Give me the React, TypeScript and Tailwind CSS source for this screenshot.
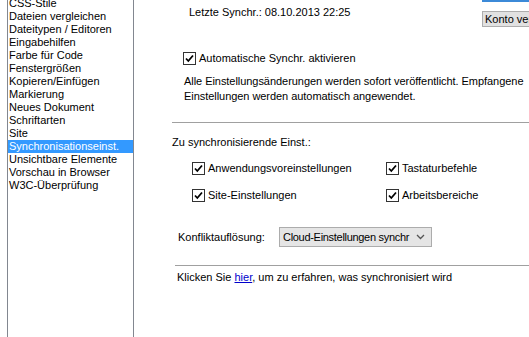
import type { ReactNode } from "react"

const items = [
  "CSS-Stile",
  "Dateien vergleichen",
  "Dateitypen / Editoren",
  "Eingabehilfen",
  "Farbe für Code",
  "Fenstergrößen",
  "Kopieren/Einfügen",
  "Markierung",
  "Neues Dokument",
  "Schriftarten",
  "Site",
  "Synchronisationseinst.",
  "Unsichtbare Elemente",
  "Vorschau in Browser",
  "W3C-Überprüfung",
]

function Check({ label, className = "" }: { label: ReactNode; className?: string }) {
  return (
    <div className={`flex items-center h-[13px] ${className}`}>
      <span className="w-[13px] h-[13px] shrink-0 border border-[#333] bg-white flex items-center justify-center">
        <svg width="11" height="11" viewBox="0 0 11 11">
          <path d="M2 5.5 L4.3 8 L9 2.5" fill="none" stroke="#000" strokeWidth="1.8" />
        </svg>
      </span>
      <span className="ml-[3px] whitespace-nowrap">{label}</span>
    </div>
  )
}

export default function App() {
  return (
    <div
      className="w-[529px] h-[337px] overflow-hidden bg-white flex text-[11px] leading-[13px] text-black"
      style={{ fontFamily: '"Liberation Sans", Arial, sans-serif' }}
    >
      {/* Kategorienliste */}
      <div className="w-[134px] shrink-0 pl-[7px]">
        <div className="h-full border-x border-[#828790] overflow-hidden">
          <ul className="-mt-[3px]">
            {items.map((it) => (
              <li
                key={it}
                className={`h-[13px] pl-[1px] whitespace-nowrap ${
                  it === "Synchronisationseinst." ? "bg-[#3399ff] text-white" : ""
                }`}
              >
                {it}
              </li>
            ))}
          </ul>
        </div>
      </div>

      {/* Einstellungen */}
      <div className="flex-1 min-w-0 flex flex-col">
        <div className="flex">
          <p className="ml-[55px] mt-[6px] whitespace-nowrap">Letzte Synchr.: 08.10.2013 22:25</p>
          <div className="ml-auto w-[47px] overflow-hidden">
            <div className="h-[2px] bg-[#3c8ad8]" />
            <button className="mt-[9px] w-[90px] h-[16px] bg-[#e1e1e1] border border-[#adadad] text-left pl-[2px] whitespace-nowrap">
              Konto verwalten
            </button>
          </div>
        </div>

        <Check className="ml-[49px] mt-[25px]" label="Automatische Synchr. aktivieren" />

        <p className="ml-[50px] mt-[9px] leading-[15px] whitespace-nowrap tracking-[-0.05px]">
          Alle Einstellungsänderungen werden sofort veröffentlicht. Empfangene
          <br />
          Einstellungen werden automatisch angewendet.
        </p>

        <div className="ml-[38px] mt-[18px] h-px bg-[#a0a0a0]" />

        <p className="ml-[38px] mt-[13px]">Zu synchronisierende Einst.:</p>

        <div className="ml-[58px] mt-[13px] grid grid-cols-[194px_auto] gap-y-[14px]">
          <Check label="Anwendungsvoreinstellungen" />
          <Check label="Tastaturbefehle" />
          <Check label="Site-Einstellungen" />
          <Check label="Arbeitsbereiche" />
        </div>

        <div className="ml-[44px] mt-[25px] flex items-center">
          <span>Konfliktauflösung:</span>
          <div className="ml-auto mr-[97px] w-[153px] h-[20px] bg-[#e5e5e5] border border-[#acacac] flex items-center pl-[3px]">
            <span className="flex-1 whitespace-nowrap overflow-hidden tracking-[-0.3px]">Cloud-Einstellungen synchr</span>
            <svg width="9" height="6" viewBox="0 0 9 6" className="mr-[6px]">
              <path d="M1 1 L4.5 4.5 L8 1" fill="none" stroke="#555" strokeWidth="1.3" />
            </svg>
          </div>
        </div>

        <div className="ml-[41px] mt-[18px] h-px bg-[#a0a0a0]" />

        <p className="ml-[43px] mt-[5px] whitespace-nowrap">
          Klicken Sie <a className="text-[#0000cc] underline">hier</a>, um zu erfahren, was synchronisiert wird
        </p>
      </div>
    </div>
  )
}
